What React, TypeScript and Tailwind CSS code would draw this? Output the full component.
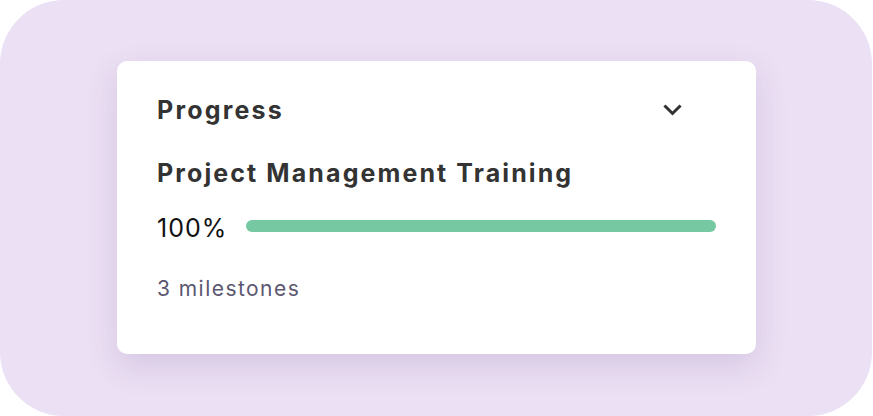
export default function App() {
  return (
    <div className="w-[873px] h-[416px] bg-white" style={{ fontFamily: "Inter, 'Noto Sans', sans-serif" }}>
      <div className="w-[872px] h-[416px] rounded-[64px] bg-[#ECE0F4] pt-[61px] pl-[117px]">
        <div className="w-[639px] h-[293px] rounded-[10px] bg-white shadow-[0_12px_32px_rgba(90,60,130,0.16)] pl-[40px] pr-[40px] pt-[35px]">
          <div className="flex items-center justify-between h-[28px]">
            <div className="text-[25px] leading-[28px] font-bold tracking-[2.2px] text-[#333333]">Progress</div>
            <svg width="24" height="24" viewBox="0 0 24 24" className="mr-[31px]" fill="none">
              <polyline points="4.5,8.5 11.5,15.5 18.5,8.5" stroke="#333333" strokeWidth="3" strokeLinecap="square" strokeLinejoin="miter" />
            </svg>
          </div>
          <div className="mt-[35px] text-[25px] leading-[28px] font-bold tracking-[2.1px] text-[#333333] whitespace-nowrap">Project Management Training</div>
          <div className="mt-[25px] flex items-center">
            <div className="text-[25px] leading-[28px] tracking-[1px] text-[#111111] w-[89px] translate-y-[1.5px]">100%</div>
            <div className="flex-1 h-[12px] rounded-full bg-[#75C8A1]"></div>
          </div>
          <div className="mt-[35px] text-[21px] leading-[28px] tracking-[1.45px] text-[#5C5770]">3 milestones</div>
        </div>
      </div>
    </div>
  );
}
